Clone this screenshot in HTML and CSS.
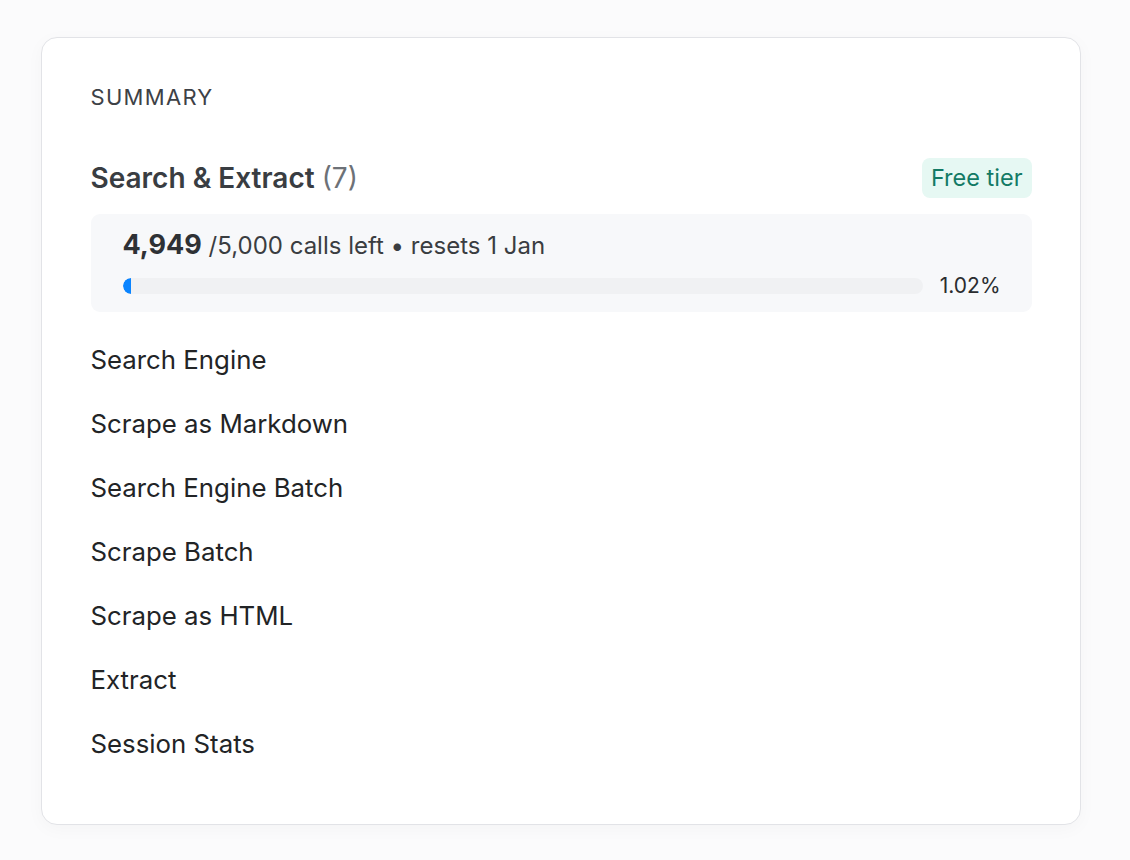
FILE: index.html
```html
<!DOCTYPE html>
<html>
<head>
<meta charset="utf-8">
<link rel="stylesheet" href="styles.css">
</head>
<body>
<div class="card">
  <div class="eyebrow">SUMMARY</div>
  <div class="group-head">
    <div class="group-title">Search &amp; Extract <span class="count">(7)</span></div>
    <div class="badge">Free tier</div>
  </div>
  <div class="usage">
    <div class="usage-line"><span class="big">4,949</span> /5,000 calls left • resets 1 Jan</div>
    <div class="bar-row">
      <div class="track"><div class="fill" style="width:1.02%"></div></div>
      <div class="pct">1.02%</div>
    </div>
  </div>
  <ul class="tools">
    <li>Search Engine</li>
    <li>Scrape as Markdown</li>
    <li>Search Engine Batch</li>
    <li>Scrape Batch</li>
    <li>Scrape as HTML</li>
    <li>Extract</li>
    <li>Session Stats</li>
  </ul>
</div>
</body>
</html>
```
FILE: styles.css
```css
html, body { margin: 0; padding: 0; }
body {
  background: #fbfbfc;
  font-family: Inter, "Noto Sans", sans-serif;
  color: #222426;
  padding: 37px 49px 35px 41px;
}
.card {
  background: #fff;
  border: 1.5px solid #e2e3e7;
  border-radius: 16px;
  box-shadow: 0 4px 18px rgba(0,0,0,0.03);
  padding: 44px 48.5px 46px 48.5px;
  box-sizing: border-box;
  height: 788px;
}
.eyebrow {
  font-size: 22px;
  line-height: 30px;
  color: #3d4146;
  letter-spacing: 1.3px;
}
.group-head {
  display: flex;
  justify-content: space-between;
  align-items: center;
  margin-top: 46px;
}
.group-title {
  font-size: 28px;
  font-weight: 600;
  color: #393d42;
  line-height: 40px;
}
.count {
  font-weight: 400;
  color: #6d7177;
}
.badge {
  background: #e6f8f3;
  color: #137a65;
  font-size: 23.5px;
  line-height: 40px;
  padding: 0 9px;
  border-radius: 8px;
}
.usage {
  margin-top: 16px;
  background: #f7f8fa;
  border-radius: 9px;
  padding: 14px 31px 11px 32px;
}
.usage-line {
  font-size: 24px;
  line-height: 34px;
  color: #3a3d41;
}
.big {
  font-size: 27px;
  font-weight: 700;
  color: #2e3135;
}
.bar-row {
  display: flex;
  align-items: center;
  gap: 17px;
  margin-top: 8px;
}
.track {
  flex: 1;
  height: 16px;
  background: #f0f1f3;
  border-radius: 8px;
  overflow: hidden;
}
.fill {
  height: 100%;
  background: #0a84ff;
  border-radius: 8px 0 0 8px;
}
.pct {
  font-size: 21px;
  line-height: 30px;
  color: #2a2c2f;
}
.tools {
  list-style: none;
  margin: 16px 0 0;
  padding: 0;
}
.tools li {
  font-size: 25.8px;
  line-height: 64px;
  color: #222426;
}
```
